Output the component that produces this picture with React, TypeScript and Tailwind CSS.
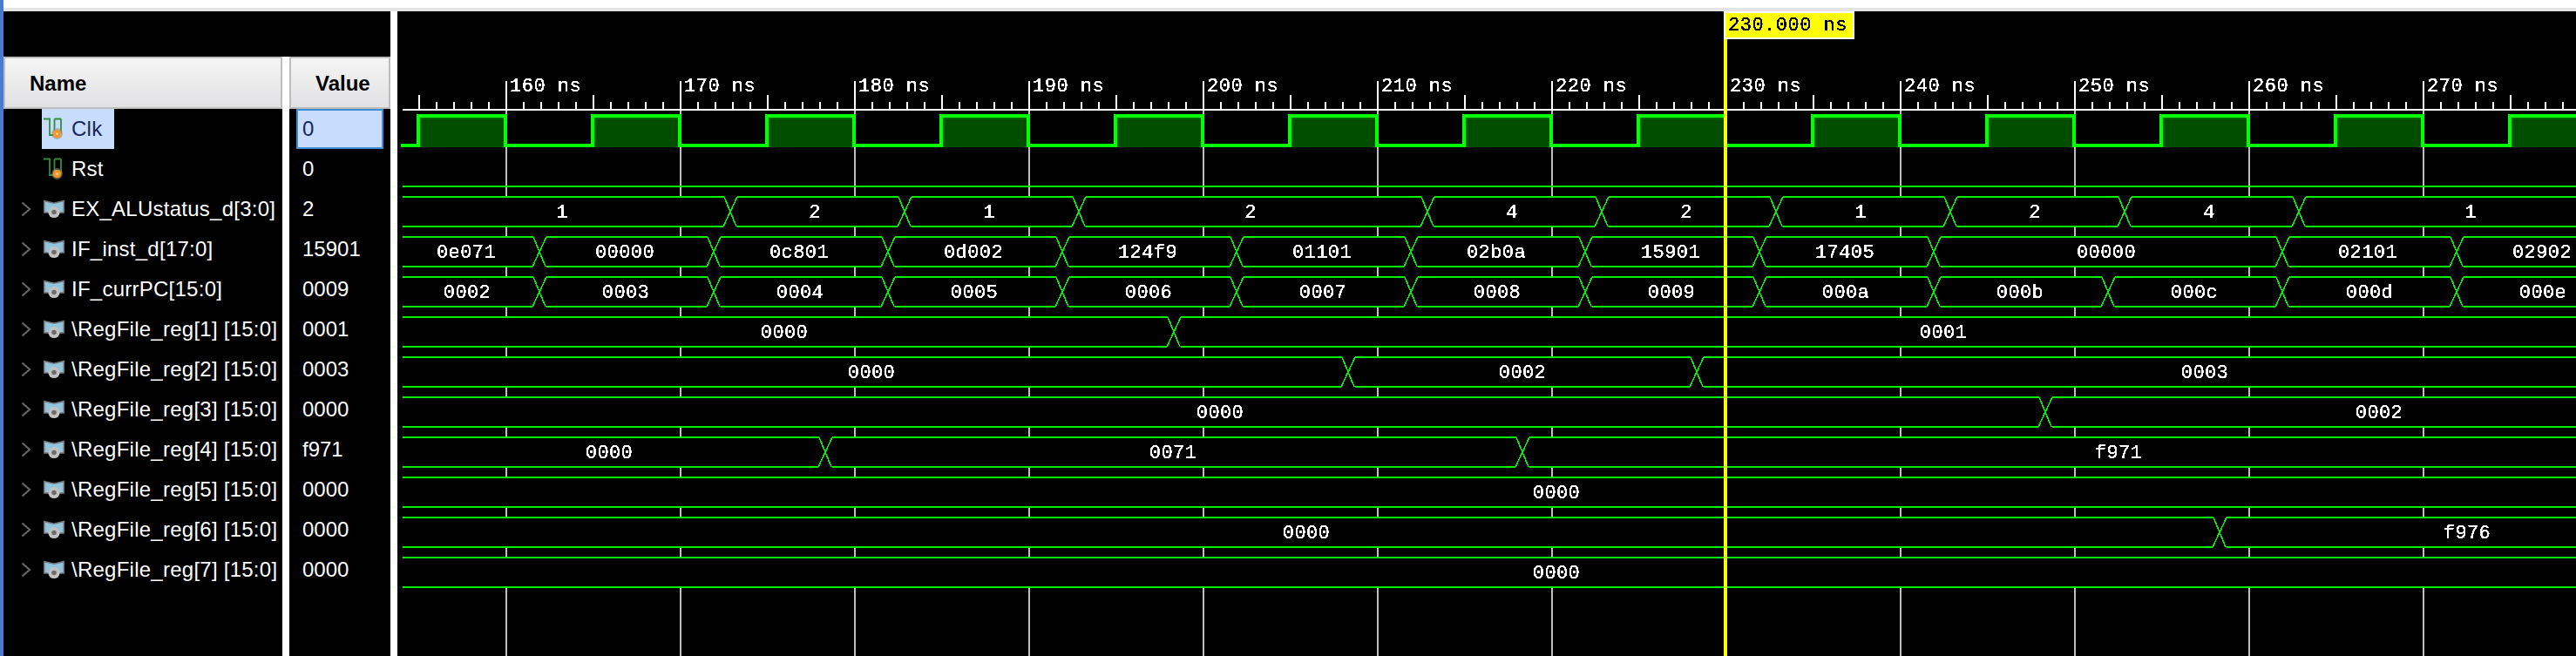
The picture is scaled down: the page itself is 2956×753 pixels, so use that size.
// Vivado-style waveform viewer

type Seg = [number, string];

type Bus = {
  changes: number[];
  labels: Seg[];
};

const MONO = "[font-family:'Liberation_Mono',monospace]";

const signals = [
  { name: "Clk", value: "0", kind: "clk" },
  { name: "Rst", value: "0", kind: "clk" },
  { name: "EX_ALUstatus_d[3:0]", value: "2", kind: "bus" },
  { name: "IF_inst_d[17:0]", value: "15901", kind: "bus" },
  { name: "IF_currPC[15:0]", value: "0009", kind: "bus" },
  { name: "\\RegFile_reg[1] [15:0]", value: "0001", kind: "bus" },
  { name: "\\RegFile_reg[2] [15:0]", value: "0003", kind: "bus" },
  { name: "\\RegFile_reg[3] [15:0]", value: "0000", kind: "bus" },
  { name: "\\RegFile_reg[4] [15:0]", value: "f971", kind: "bus" },
  { name: "\\RegFile_reg[5] [15:0]", value: "0000", kind: "bus" },
  { name: "\\RegFile_reg[6] [15:0]", value: "0000", kind: "bus" },
  { name: "\\RegFile_reg[7] [15:0]", value: "0000", kind: "bus" },
];

const buses: Bus[] = [
  {
    changes: [838, 1038, 1238, 1638, 1838, 2038, 2238, 2438, 2638],
    labels: [[645, "1"], [935, "2"], [1135, "1"], [1435, "2"], [1735, "4"], [1935, "2"], [2135, "1"], [2335, "2"], [2535, "4"], [2835, "1"]],
  },
  {
    changes: [619, 819, 1019, 1219, 1419, 1619, 1819, 2019, 2219, 2619, 2819],
    labels: [[535, "0e071"], [717, "00000"], [917, "0c801"], [1117, "0d002"], [1317, "124f9"], [1517, "01101"], [1717, "02b0a"], [1917, "15901"], [2117, "17405"], [2417, "00000"], [2717, "02101"], [2917, "02902"]],
  },
  {
    changes: [619, 819, 1019, 1219, 1419, 1619, 1819, 2019, 2219, 2419, 2619, 2819],
    labels: [[536, "0002"], [718, "0003"], [918, "0004"], [1118, "0005"], [1318, "0006"], [1518, "0007"], [1718, "0008"], [1918, "0009"], [2118, "000a"], [2318, "000b"], [2518, "000c"], [2719, "000d"], [2918, "000e"]],
  },
  { changes: [1347], labels: [[900, "0000"], [2230, "0001"]] },
  { changes: [1547, 1947], labels: [[1000, "0000"], [1747, "0002"], [2530, "0003"]] },
  { changes: [2347], labels: [[1400, "0000"], [2730, "0002"]] },
  { changes: [947, 1747], labels: [[699, "0000"], [1346, "0071"], [2431, "f971"]] },
  { changes: [], labels: [[1786, "0000"]] },
  { changes: [2547], labels: [[1499, "0000"], [2831, "f976"]] },
  { changes: [], labels: [[1786, "0000"]] },
];

const ticks = Array.from({ length: 124 }, (_, i) => 480 + i * 20);
const majors = Array.from({ length: 12 }, (_, i) => ({ x: 580 + i * 200, label: `${160 + i * 10} ns` }));
const clkRises = Array.from({ length: 13 }, (_, i) => 480 + i * 200);

function Chevron() {
  return (
    <svg width="12" height="18" viewBox="0 0 12 18" className="block">
      <path d="M1.5 1.5 L10 9 L1.5 16.5" fill="none" stroke="#666666" strokeWidth="2.2" />
    </svg>
  );
}

function WireIcon() {
  return (
    <svg width="24" height="26" viewBox="0 0 24 26" className="block shrink-0">
      <path d="M0 1.5 H7 V20 H14" fill="none" stroke="#2f8f3a" strokeWidth="1.8" />
      <path d="M12.5 1.5 V15 M20 1.5 V18 M12.5 1.5 H20" fill="none" stroke="#2f8f3a" strokeWidth="1.8" />
      <circle cx="15.5" cy="18.5" r="6.5" fill="#8a8a8a" opacity="0.55" />
      <circle cx="15.5" cy="18.5" r="4.8" fill="#f0962a" />
      <circle cx="15.5" cy="18.5" r="1.6" fill="#f9c77e" />
    </svg>
  );
}

function BusIcon() {
  return (
    <svg width="24" height="22" viewBox="0 0 24 22" className="block shrink-0">
      <path d="M0.8 1.5 L11 4 H13 L23.2 1.5 V15 H0.8 Z" fill="#93c4de" stroke="#6f7478" strokeWidth="1.5" />
      <circle cx="12" cy="14.5" r="6.6" fill="#c2c2c2" />
      <circle cx="12" cy="14.5" r="2.8" fill="#6d6d6d" />
    </svg>
  );
}

function BusRow({ bus, top }: { bus: Bus; top: number }) {
  const bottom = top + 34;
  const edges = [462, ...bus.changes];
  const topPath = edges
    .map((x, i) => `M${i === 0 ? x : x + 8} ${top} H${i + 1 < edges.length ? edges[i + 1] - 7 : 2956}`)
    .join(" ");
  const bottomPath = edges
    .map((x, i) => `M${i === 0 ? x : x + 8} ${bottom} H${i + 1 < edges.length ? edges[i + 1] - 8 : 2956}`)
    .join(" ");
  return (
    <g>
      <rect x={462} y={top} width={2494} height={34} fill="#000000" />
      {bus.changes.map((c) => (
        <path
          key={c}
          d={`M${c - 7} ${top} L${c + 7} ${bottom} M${c + 8} ${top} L${c - 8} ${bottom}`}
          stroke="#00f000"
          strokeWidth="1.6"
          fill="none"
          shapeRendering="crispEdges"
        />
      ))}
      <path d={topPath} stroke="#00f000" strokeWidth="2" fill="none" shapeRendering="crispEdges" />
      <path d={bottomPath} stroke="#00f000" strokeWidth="2" fill="none" shapeRendering="crispEdges" />
      <g filter="url(#aliased)">
        {bus.labels.map(([x, label]) => (
          <text key={x} x={x} y={top + 24} textAnchor="middle" fill="#ffffff" fontSize="22" letterSpacing="0.4" className={MONO}>
            {label}
          </text>
        ))}
      </g>
    </g>
  );
}

function Waves() {
  return (
    <svg width="2500" height="740" viewBox="456 13 2500 740" className="block">
      <defs>
        {/* hard edge on the text, the viewer draws it without smoothing */}
        <filter id="aliased" filterUnits="userSpaceOnUse" x="456" y="13" width="2500" height="740" colorInterpolationFilters="sRGB">
          <feComponentTransfer>
            <feFuncA type="discrete" tableValues="0 1 1 1" />
          </feComponentTransfer>
        </filter>
      </defs>

      {/* =================GRID================= */}
      {majors.map((m) => (
        <rect key={m.x} x={m.x} y={127} width={2} height={626} fill="#bdbdbd" />
      ))}

      {/* =================TIME AXIS================= */}
      <rect x={462} y={125} width={2494} height={2} fill="#ffffff" />
      {ticks.map((x) => {
        const major = (x - 580) % 200 === 0;
        const mid = (x - 480) % 200 === 0;
        const y = major ? 93 : mid ? 109 : 117;
        return <rect key={x} x={x} y={y} width={2} height={125 - y} fill="#ffffff" />;
      })}
      <g filter="url(#aliased)">
        {majors.map((m) => (
          <text key={m.x} x={m.x + 5} y={105} fill="#ffffff" fontSize="22" letterSpacing="0.5" className={MONO}>
            {m.label}
          </text>
        ))}
      </g>

      {/* =================CLK================= */}
      {clkRises.map((x) => (
        <g key={x}>
          <rect x={x} y={133} width={100} height={36} fill="#006400" />
          <rect x={x + 4} y={137} width={96} height={32} fill="#004d00" />
        </g>
      ))}
      <path
        d={`M460 167 H480 ${clkRises.map((x) => `V133 H${x + 100} V167 H${x + 200}`).join(" ")}`}
        fill="none"
        stroke="#00ff00"
        strokeWidth="4"
        shapeRendering="crispEdges"
      />

      {/* =================RST================= */}
      <rect x={462} y={213} width={2494} height={2} fill="#00f000" />

      {/* =================BUSES================= */}
      {buses.map((bus, i) => (
        <BusRow key={i} bus={bus} top={226 + i * 46} />
      ))}

      {/* =================CURSOR================= */}
      <rect x={1978} y={13} width={4} height={740} fill="#ffff00" />
      <rect x={1979} y={14} width={148} height={30} fill="#ffff00" stroke="#ffffff" strokeWidth="2" />
      <g filter="url(#aliased)">
        <text x={1983} y={35} fill="#000000" fontSize="22" letterSpacing="0.5" className={MONO}>
          230.000 ns
        </text>
      </g>
    </svg>
  );
}

function HeaderCell({ label, className }: { label: string; className: string }) {
  return (
    <div
      className={`h-[60px] flex items-center pt-[2px] border-2 border-[#bdbdbd] bg-gradient-to-b from-[#f5f5f5] to-[#e1e1e3] text-[24px] font-bold text-black ${className}`}
    >
      {label}
    </div>
  );
}

export default function App() {
  return (
    <div className="w-[2956px] h-[753px] flex overflow-hidden bg-white [font-family:'Liberation_Sans',Arial,sans-serif]">
      <div className="w-1 h-full bg-[#4a7bd0]" />

      <div className="flex-1 flex flex-col">
        <div className="h-[9px] bg-white" />
        <div className="h-1 bg-[#e4e4e4]" />

        <div className="flex-1 flex">
          {/* =================NAME / VALUE================= */}
          <div className="w-[444px] flex flex-col bg-black">
            <div className="h-[52px]" />
            <div className="flex-1 flex">
              <div className="w-[320px]">
                <HeaderCell label="Name" className="pl-[28px]" />
                {signals.map((s, i) => (
                  <div key={s.name} className="h-[46px] flex items-center">
                    <div className="w-[44px] shrink-0 pl-[20px]">{s.kind === "bus" && <Chevron />}</div>
                    <div
                      className={`h-full flex items-center gap-2 pl-[2px] text-[24px] tracking-[0.25px] whitespace-nowrap ${
                        i === 0 ? "pr-[14px] bg-[#c8dcfb] text-[#14285a]" : "text-white"
                      }`}
                    >
                      {s.kind === "bus" ? <BusIcon /> : <WireIcon />}
                      <span>{s.name}</span>
                    </div>
                  </div>
                ))}
              </div>

              <div className="w-2 bg-white" />

              <div className="w-[116px]">
                <HeaderCell label="Value" className="pl-[28px]" />
                {signals.map((s, i) => (
                  <div key={s.name} className="h-[46px] px-2">
                    <div
                      className={`h-full flex items-center pl-[5px] text-[24px] border-2 ${
                        i === 0 ? "border-[#3d8fd0] bg-[#c8dcfb] text-[#14285a]" : "border-transparent text-white"
                      }`}
                    >
                      {s.value}
                    </div>
                  </div>
                ))}
              </div>
            </div>
          </div>

          <div className="w-2 bg-white" />

          {/* =================WAVEFORM================= */}
          <div className="flex-1 bg-black overflow-hidden">
            <Waves />
          </div>
        </div>
      </div>
    </div>
  );
}
